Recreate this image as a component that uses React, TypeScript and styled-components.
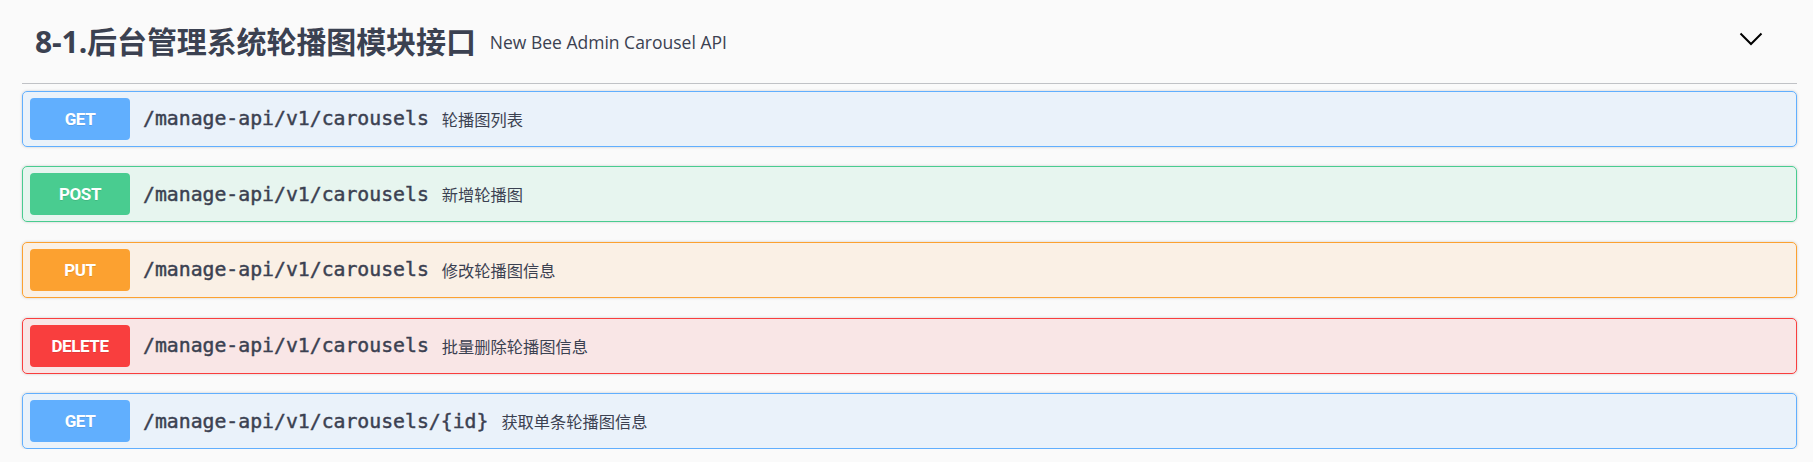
import React from "react";
import styled, { createGlobalStyle } from "styled-components";

const GlobalStyle = createGlobalStyle`
  html, body {
    margin: 0;
    padding: 0;
    background: #fafafa;
  }
  body {
    font-family: "Open Sans", "Noto Sans CJK SC", sans-serif;
    color: #3b4151;
  }
`;

type Method = "GET" | "POST" | "PUT" | "DELETE";

const palette: Record<Method, { main: string; bg: string }> = {
  GET: { main: "#61affe", bg: "rgba(97, 175, 254, 0.1)" },
  POST: { main: "#49cc90", bg: "rgba(73, 204, 144, 0.1)" },
  PUT: { main: "#fca130", bg: "rgba(252, 161, 48, 0.1)" },
  DELETE: { main: "#f93e3e", bg: "rgba(249, 62, 62, 0.1)" },
};

const Page = styled.div`
  padding: 0 16px 0 22px;
`;

const Section = styled.section`
  display: flex;
  flex-direction: column;
`;

const TagHeader = styled.header`
  display: flex;
  align-items: center;
  height: 83px;
  padding: 0 0 0 13px;
  border-bottom: 1px solid rgba(59, 65, 81, 0.3);
  margin-bottom: 6.7px;
  box-sizing: content-box;
`;

const TagTitle = styled.h3`
  margin: 0;
  font-family: "Open Sans", "Noto Sans CJK SC", sans-serif;
  font-size: 30px;
  font-weight: 700;
  color: #3b4151;
  letter-spacing: -0.1px;
  line-height: 1.2;
`;

const TagDesc = styled.small`
  font-family: "Open Sans", "Noto Sans CJK SC", sans-serif;
  font-size: 17.5px;
  font-weight: 400;
  color: #3b4151;
  padding: 0 14px;
  flex: 1;
`;

const ExpandButton = styled.button`
  border: none;
  background: none;
  padding: 0;
  margin: 0 34px 5px 0;
  display: flex;
  align-items: center;
  cursor: pointer;
`;

const OpList = styled.div`
  display: flex;
  flex-direction: column;
  gap: 19.65px;
`;

const OpBlock = styled.div<{ $method: Method }>`
  display: flex;
  align-items: center;
  height: 56px;
  box-sizing: border-box;
  padding: 0 7px;
  border: 1px solid ${(p) => palette[p.$method].main};
  background: ${(p) => palette[p.$method].bg};
  border-radius: 5px;
  box-shadow: 0 0 3px rgba(0, 0, 0, 0.19);
`;

const MethodBadge = styled.span<{ $method: Method }>`
  display: flex;
  align-items: center;
  justify-content: center;
  width: 100px;
  height: 42px;
  flex-shrink: 0;
  border-radius: 4px;
  background: ${(p) => palette[p.$method].main};
  color: #fff;
  font-family: Roboto, "Open Sans", sans-serif;
  font-weight: 700;
  font-size: 17px;
  letter-spacing: -0.4px;
  text-shadow: 0 1px 0 rgba(0, 0, 0, 0.1);
`;

const OpPath = styled.span`
  font-family: "DejaVu Sans Mono", "Liberation Mono", monospace;
  font-size: 19.8px;
  font-weight: 400;
  -webkit-text-stroke: 0.45px #3b4151;
  color: #3b4151;
  padding: 0 13px;
`;

const OpSummary = styled.span`
  font-family: "Open Sans", "Noto Sans CJK SC", sans-serif;
  font-size: 16.25px;
  color: #3b4151;
`;

const ops: { method: Method; path: string; summary: string }[] = [
  { method: "GET", path: "/manage-api/v1/carousels", summary: "轮播图列表" },
  { method: "POST", path: "/manage-api/v1/carousels", summary: "新增轮播图" },
  { method: "PUT", path: "/manage-api/v1/carousels", summary: "修改轮播图信息" },
  { method: "DELETE", path: "/manage-api/v1/carousels", summary: "批量删除轮播图信息" },
  { method: "GET", path: "/manage-api/v1/carousels/{id}", summary: "获取单条轮播图信息" },
];

export default function App() {
  return (
    <>
      <GlobalStyle />
      <Page>
        <Section>
          <TagHeader>
            <TagTitle>8-1.后台管理系统轮播图模块接口</TagTitle>
            <TagDesc>New Bee Admin Carousel API</TagDesc>
            <ExpandButton aria-label="collapse">
              <svg width="24" height="14" viewBox="0 0 24 14">
                <polyline
                  points="1.5,1.5 12,12 22.5,1.5"
                  fill="none"
                  stroke="#000"
                  strokeWidth="2"
                />
              </svg>
            </ExpandButton>
          </TagHeader>
          <OpList>
            {ops.map((op, i) => (
              <OpBlock key={i} $method={op.method}>
                <MethodBadge $method={op.method}>{op.method}</MethodBadge>
                <OpPath>{op.path}</OpPath>
                <OpSummary>{op.summary}</OpSummary>
              </OpBlock>
            ))}
          </OpList>
        </Section>
      </Page>
    </>
  );
}
